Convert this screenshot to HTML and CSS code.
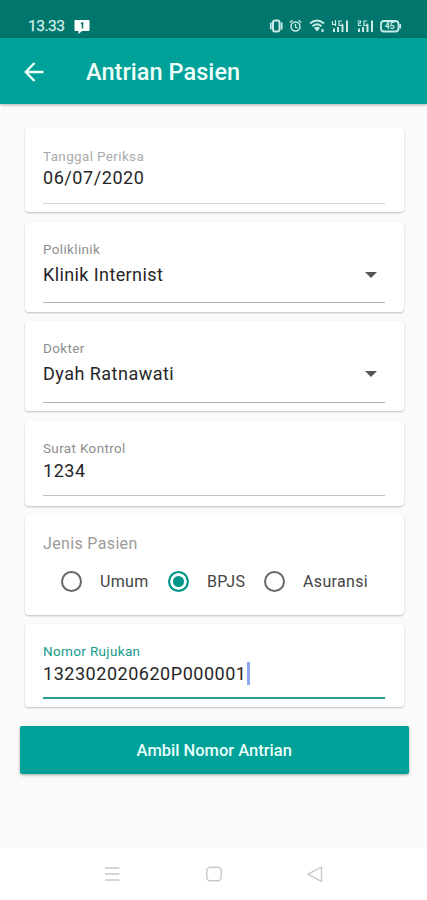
FILE: index.html
```html
<!DOCTYPE html>
<html lang="id">
<head>
<meta charset="utf-8">
<title>Antrian Pasien</title>
<link rel="stylesheet" href="styles.css">
</head>
<body>
<div class="screen">
  <header class="status">
    <span class="clock">13.33</span>
    <svg class="note" width="16" height="15" viewBox="0 0 16 15"><path d="M1.500 0h13q1 0 1 1v9q0 1-1 1H8l-3.500 3V11h-3q-1 0-1-1V1q0-1 1-1z" fill="#fff"/><path d="M7 3.800l1.500-1v5.700" fill="none" stroke="#00766d" stroke-width="1.500"/></svg>
    <svg class="indicators" width="136" height="16" viewBox="0 0 136 16" fill="none" stroke="#c9ebe5" stroke-width="1.500">
      <rect x="5" y="2.500" width="6.500" height="11" rx="2" stroke-width="2"/><path d="M2.800 4.500v7M13.700 4.500v7" stroke-width="1.700"/>
      <circle cx="27.500" cy="8.500" r="4.500"/><path d="M27.500 6v3l2 1M21.800 4.500l2.700-2.300M33.200 4.500l-2.700-2.300" stroke-width="1.300"/>
      <path d="M42 5.500q7-6 14 0M44.500 8.300q4.500-4 9 0" stroke-width="1.900"/><path d="M46 10q3-2.500 6 0l-3 3.500z" fill="#c9ebe5" stroke="none"/><path d="M54.500 11v3" stroke-width="2"/>
      <path d="M64.500 3v3.500h3.500M67.500 2v6M74 3h-3v4.500h3v-2" stroke-width="1.200"/><path d="M66 10.500V14M70 9v5M74.500 6.500V14M79 2.500V14" stroke-width="2"/>
      <path d="M89.500 3h3v2h-2v2.500h3M99 3h-3v4.500h3v-2" stroke-width="1.200"/><path d="M91 10.500V14M95 9v5M99.500 6.500V14M104 2.500V14" stroke-width="2"/>
      <rect x="113" y="3" width="17.500" height="10.500" rx="3" stroke-width="1.800"/><path d="M132.200 6v4.500" stroke-width="1.800"/>
      <text x="121.700" y="11.400" text-anchor="middle" class="charge">45</text>
    </svg>
  </header>
  <div class="appbar">
    <svg width="20" height="20" viewBox="0 0 20 20" fill="none" stroke="#effffb" stroke-width="2.300"><path d="M19.500 10H2M10.500 1L1.700 10l8.800 9"/></svg>
    <h1>Antrian Pasien</h1>
  </div>
  <main class="form">
    <section class="card date">
      <div class="label">Tanggal Periksa</div>
      <div class="value">06/07/2020</div>
    </section>
    <section class="card select poli">
      <div class="label">Poliklinik</div>
      <div class="value">Klinik Internist<i class="caret"></i></div>
    </section>
    <section class="card select doctor">
      <div class="label">Dokter</div>
      <div class="value">Dyah Ratnawati<i class="caret"></i></div>
    </section>
    <section class="card letter">
      <div class="label">Surat Kontrol</div>
      <div class="value">1234</div>
    </section>
    <section class="card kind">
      <div class="legend">Jenis Pasien</div>
      <div class="options">
        <div class="option"><i class="radio"></i><span>Umum</span></div>
        <div class="option"><i class="radio on"></i><span>BPJS</span></div>
        <div class="option"><i class="radio"></i><span>Asuransi</span></div>
      </div>
    </section>
    <section class="card referral">
      <div class="label">Nomor Rujukan</div>
      <div class="value"><span>132302020620P000001</span><i class="cursor"></i></div>
    </section>
    <div class="submit">Ambil Nomor Antrian</div>
  </main>
  <nav class="nav">
    <svg width="16" height="16" viewBox="0 0 16 16" fill="none" stroke="#c9c9c9" stroke-width="1.400"><path d="M1 2h14.500M1 8h14.500M1 14h14.500"/></svg>
    <svg width="16" height="16" viewBox="0 0 16 16" fill="none" stroke="#c9c9c9" stroke-width="1.400"><rect x=".8" y="1.200" width="14.400" height="13.600" rx="3.500"/></svg>
    <svg width="16" height="16" viewBox="0 0 16 16" fill="none" stroke="#c9c9c9" stroke-width="1.400" stroke-linejoin="round"><path d="M14.500 1v14.500L1 8.200z"/></svg>
  </nav>
</div>
</body>
</html>
```

FILE: styles.css
```css
* { box-sizing: border-box; }
body { margin: 0; font-family: Roboto, "Liberation Sans", sans-serif; }
.screen { width: 427px; height: 900px; display: flex; flex-direction: column; background: #fafafa; white-space: nowrap; overflow: hidden; }
.status { height: 38px; flex: none; display: flex; align-items: flex-start; padding: 18px 23.500px 0 28px; background: #00766d; color: #d5f0ea; }
.clock { width: 46px; font-size: 15.500px; line-height: 17px; letter-spacing: -.5px; -webkit-text-stroke: .25px #d5f0ea; }
.note { margin-top: 2px; }
.indicators { margin-left: auto; }
.charge { font-size: 8.500px; font-weight: 700; fill: #c9ebe5; stroke: none; }
.appbar { height: 66px; flex: none; display: flex; align-items: center; padding: 1px 24px 0; background: #00a198; color: #effffb; box-shadow: 0 1px 3px rgba(0,0,0,.3); }
.appbar h1 { margin: 0 0 0 42px; font-size: 23.500px; font-weight: 500; line-height: 30px; letter-spacing: .05px; }
.form { flex: 1; padding: 24px 18.500px 0 20px; }
.card { margin: 0 4.500px 9.600px 5px; padding: 19.500px 19px 0 18px; background: #fff; border-radius: 4px; box-shadow: 0 1px 2px rgba(0,0,0,.24); }
.label { font-size: 13.500px; line-height: 16px; color: #8e8e8e; letter-spacing: .35px; }
.value { display: flex; align-items: center; margin-top: 3px; height: 36.500px; padding-bottom: 14px; border-bottom: 1px solid #c2c2c2; font-size: 18px; line-height: 22px; color: #262626; letter-spacing: .57px; }
.date { height: 84.300px; }
.date .label { color: #aaa; }
.date .value { height: 37px; border-color: #d5d5d5; }
.select { height: 90px; }
.select .label { margin-top: -.5px; }
.select .value { margin-top: 6.500px; height: 40px; padding-bottom: 16px; border-color: #b4b4b4; letter-spacing: .4px; }
.doctor .value { letter-spacing: .48px; }
.letter { height: 84.500px; }
.letter .label { margin-top: -.5px; }
.letter .value { margin-top: 4px; height: 36px; padding-bottom: 13px; }
.caret { margin: 0 8px 0 auto; border: 6px solid transparent; border-top-color: #555; border-bottom: 0; }
.kind { height: 99.500px; padding-top: 20px; }
.legend { font-size: 16px; line-height: 18px; letter-spacing: .35px; color: #9b9b9b; }
.options { display: grid; grid-template-columns: 107px 96px 1fr; padding: 17px 0 0 18px; }
.option { display: flex; align-items: center; height: 22px; font-size: 16px; color: #444; letter-spacing: .35px; }
.radio { width: 21px; height: 21px; margin-right: 18px; border: 2px solid #686868; border-radius: 50%; }
.radio.on { border-color: #009688; background: #009688; box-shadow: inset 0 0 0 3px #fff; }
.referral { height: 82.500px; padding-top: 18.500px; }
.referral .label { color: #159c8b; }
.referral .value { margin-top: 4px; height: 36.500px; padding-bottom: 13px; border-bottom: 2px solid #2b9c94; letter-spacing: .53px; }
.cursor { width: 3px; height: 23px; margin-left: 0; background: #8da8ee; }
.submit { height: 48px; margin-top: 19px; padding-top: 1px; border-radius: 2px; background: #00a198; color: #e8fffb; box-shadow: 0 1px 3px rgba(0,0,0,.35); font-size: 16.500px; font-weight: 500; line-height: 47.500px; text-align: center; }
.nav { height: 52px; flex: none; display: flex; justify-content: space-between; align-items: center; padding: 0 104px; background: #fff; }
```
